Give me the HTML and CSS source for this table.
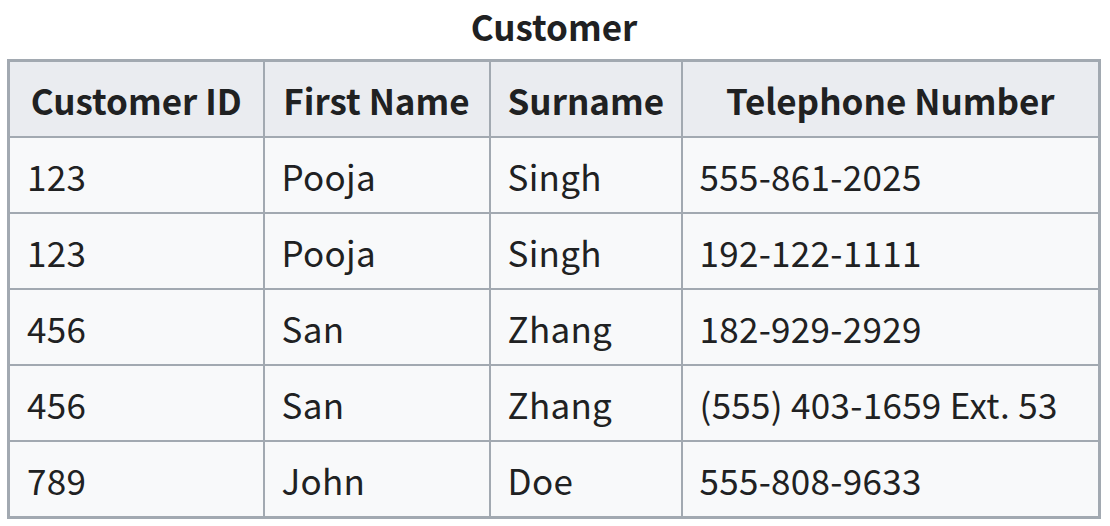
FILE: index.html
```html
<!DOCTYPE html>
<html>
<head>
<meta charset="utf-8">
<link rel="stylesheet" href="styles.css">
</head>
<body>
<table class="wikitable">
<caption>Customer</caption>
<colgroup>
<col class="c1"><col class="c2"><col class="c3"><col class="c4">
</colgroup>
<thead>
<tr><th>Customer ID</th><th>First Name</th><th>Surname</th><th>Telephone Number</th></tr>
</thead>
<tbody>
<tr><td>123</td><td>Pooja</td><td>Singh</td><td>555-861-2025</td></tr>
<tr><td>123</td><td>Pooja</td><td>Singh</td><td>192-122-1111</td></tr>
<tr><td>456</td><td>San</td><td>Zhang</td><td>182-929-2929</td></tr>
<tr><td>456</td><td>San</td><td>Zhang</td><td>(555) 403-1659 Ext. 53</td></tr>
<tr><td>789</td><td>John</td><td>Doe</td><td>555-808-9633</td></tr>
</tbody>
</table>
</body>
</html>
```
FILE: styles.css
```css
html, body {
  margin: 0;
  padding: 0;
  background: #ffffff;
}
body {
  padding: 0 7px;
  font-family: "Noto Sans CJK KR", "Noto Sans", sans-serif;
  color: #202122;
}
.wikitable {
  border-collapse: collapse;
  background: #f8f9fa;
  border: 3px solid #a2a9b1;
  font-size: 35px;
  table-layout: fixed;
  width: 1093px;
}
.wikitable caption {
  font-weight: bold;
  font-size: 35px;
  line-height: 1;
  padding: 8px 0 16px;
  background: #ffffff;
}
.c1 { width: 255px; }
.c2 { width: 226px; }
.c3 { width: 192px; }
.c4 { width: 418px; }
.wikitable th,
.wikitable td {
  border: 2px solid #a2a9b1;
  height: 74px;
  padding: 0 17px;
  white-space: nowrap;
  line-height: 1;
}
.wikitable th {
  background: #eaecf0;
  font-weight: bold;
  text-align: center;
}
.wikitable td {
  text-align: left;
  letter-spacing: 0.3px;
}
```
